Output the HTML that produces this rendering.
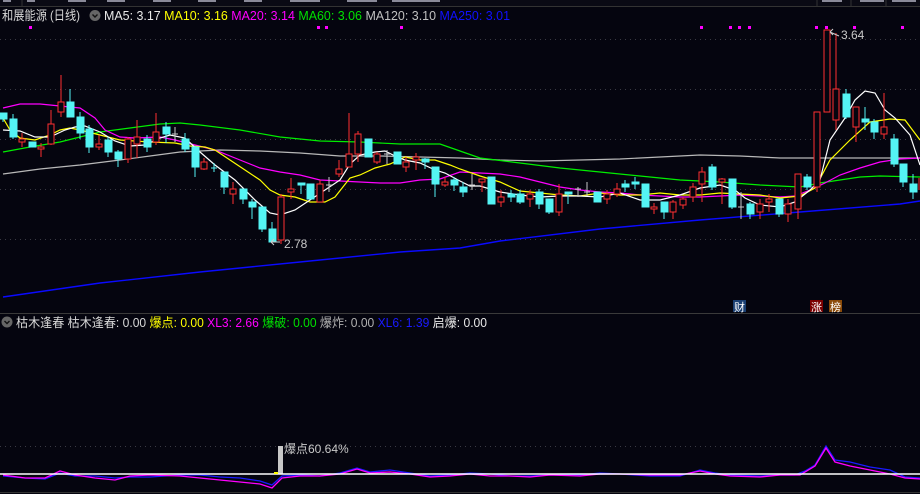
<!DOCTYPE html>
<html><head><meta charset="utf-8"><style>
html,body{margin:0;padding:0;background:#05050f;width:920px;height:494px;overflow:hidden}
svg{display:block}
text{font-family:"Liberation Sans","Noto Sans CJK SC",sans-serif}
</style></head><body>
<svg width="920" height="494" viewBox="0 0 920 494" xmlns="http://www.w3.org/2000/svg">
<rect width="920" height="494" fill="#05050f"/>
<rect x="0" y="0" width="920" height="6" fill="#0a0a14"/>
<g fill="#8a8a99"><rect x="3" y="0" width="8" height="2"/><rect x="27" y="0" width="8" height="2"/><rect x="68" y="0" width="18" height="2"/><rect x="107" y="0" width="18" height="2"/><rect x="153" y="0" width="18" height="2"/><rect x="198" y="0" width="18" height="2"/><rect x="244" y="0" width="18" height="2"/><rect x="290" y="0" width="30" height="2"/><rect x="347" y="0" width="30" height="2"/><rect x="392" y="0" width="48" height="2"/><rect x="822" y="0" width="20" height="2"/><rect x="860" y="0" width="24" height="2"/><rect x="892" y="0" width="24" height="2"/></g>
<line x1="22" y1="0" x2="22" y2="6" stroke="#333"/><line x1="817" y1="0" x2="817" y2="6" stroke="#333"/><line x1="851" y1="0" x2="851" y2="6" stroke="#333"/><line x1="886" y1="0" x2="886" y2="6" stroke="#333"/>
<line x1="0" y1="6.5" x2="920" y2="6.5" stroke="#333"/>
<text x="2" y="20" font-size="13" fill="#d8d8d8" textLength="78" lengthAdjust="spacingAndGlyphs">和展能源 (日线)</text>
<circle cx="95" cy="15.5" r="5.5" fill="#666"/><path d="M92.5 14.5 L95 17 L97.5 14.5" stroke="#111" stroke-width="1.4" fill="none"/>
<text x="104" y="20" font-size="13" textLength="406" lengthAdjust="spacingAndGlyphs"><tspan fill="#e8e8e8">MA5: 3.17 </tspan><tspan fill="#ffff00">MA10: 3.16 </tspan><tspan fill="#ff00ff">MA20: 3.14 </tspan><tspan fill="#00e000">MA60: 3.06 </tspan><tspan fill="#c0c0c0">MA120: 3.10 </tspan><tspan fill="#1010ff">MA250: 3.01</tspan></text>
<g fill="#ff00ff"><rect x="29" y="26" width="3" height="3"/><rect x="317" y="26" width="3" height="3"/><rect x="325" y="26" width="3" height="3"/><rect x="400" y="26" width="3" height="3"/><rect x="700" y="26" width="3" height="3"/><rect x="729" y="26" width="3" height="3"/><rect x="738" y="26" width="3" height="3"/><rect x="748" y="26" width="3" height="3"/><rect x="815" y="26" width="3" height="3"/><rect x="825" y="26" width="3" height="3"/><rect x="853" y="26" width="3" height="3"/><rect x="901" y="26" width="3" height="3"/></g>
<g stroke="#3a3a44" stroke-dasharray="1,4"><line x1="0" y1="39.5" x2="920" y2="39.5"/><line x1="0" y1="89.5" x2="920" y2="89.5"/><line x1="0" y1="139.5" x2="920" y2="139.5"/><line x1="0" y1="189.5" x2="920" y2="189.5"/><line x1="0" y1="239.5" x2="920" y2="239.5"/><line x1="0" y1="446.5" x2="920" y2="446.5"/></g>
<g fill="none" stroke-width="1.2">
<polyline stroke="#b8b8b8" points="3,174 40,169 80,165 120,160 150,156 180,152 220,150 260,151 300,153 340,156 380,156 420,157 460,158 500,160 540,161 580,160 620,159 660,157 700,155 740,156 780,158 820,158 860,158 920,158"/>
<polyline stroke="#00ee00" points="3,152 30,147 60,142 80,137 100,132 130,128 160,124 180,123 200,125 240,130 280,137 320,141 360,142 400,144 440,144 460,151 480,158 520,163 560,168 600,172 640,176 680,180 720,182 760,185 800,187 820,183 840,180 860,177 880,176 920,177"/>
<polyline stroke="#ff00ff" points="3,108 20,104 40,104 60,106 80,108 95,118 105,130 120,137 135,138 160,137 175,140 195,145 215,150 240,160 260,168 280,172 300,175 320,180 340,181 360,182 380,183 400,183 420,180 440,179 460,172 480,173 500,174 520,177 540,182 560,187 580,190 600,192 620,193 640,195 660,196 680,197 700,197 720,196 740,195 760,196 780,197 795,196 810,190 825,183 840,175 860,168 880,162 900,159 920,158"/>
<polyline stroke="#ffff00" points="3,118 10,130 20,138 35,140 50,135 60,130 70,128 80,130 100,135 120,140 150,142 175,143 190,146 205,147 215,150 230,160 245,170 260,180 270,190 280,195 295,197 310,202 325,202 335,197 350,178 360,175 375,168 390,164 405,157 420,160 435,160 450,165 460,169 480,176 500,182 520,191 540,193 560,195 580,196 600,193 620,195 640,195 660,193 680,195 700,195 720,193 740,194 760,195 780,198 800,196 815,188 830,160 850,140 870,122 890,119 905,120 920,140"/>
<polyline stroke="#ffffff" points="3,130 20,131 35,137 50,137 65,130 75,127 85,126 100,132 115,141 130,146 145,145 160,138 170,135 185,138 200,152 215,165 235,180 255,200 270,213 280,215 295,210 310,200 325,190 340,180 350,164 360,155 375,152 385,151 395,156 405,160 420,163 435,170 445,173 460,181 470,186 480,186 490,189 500,192 520,195 540,197 560,196 580,196 600,197 620,193 640,200 660,200 680,195 700,188 720,185 735,190 745,198 760,205 780,207 795,202 810,190 820,180 830,140 845,118 855,100 865,91 875,93 885,110 895,118 910,135 920,165"/>
<polyline stroke="#0a0aff" stroke-width="1.4" points="3,297 100,283 200,272 300,262 400,252 460,248 500,241 600,229 700,220 800,212 900,204 920,201"/>
</g>
<g stroke="#54f4f4" fill="#54f4f4" shape-rendering="crispEdges">
<line x1="3" y1="113" x2="3" y2="122"/><rect x="0" y="113" width="7" height="6"/>
<line x1="13" y1="114" x2="13" y2="139"/><rect x="10" y="119" width="7" height="18"/>
<line x1="32" y1="142" x2="32" y2="147"/><rect x="29" y="142" width="7" height="5"/>
<line x1="70" y1="89" x2="70" y2="117"/><rect x="67" y="102" width="7" height="15"/>
<line x1="80" y1="112" x2="80" y2="139"/><rect x="77" y="117" width="7" height="16"/>
<line x1="89" y1="125" x2="89" y2="153"/><rect x="86" y="129" width="7" height="18"/>
<line x1="108" y1="137" x2="108" y2="157"/><rect x="105" y="140" width="7" height="12"/>
<line x1="118" y1="150" x2="118" y2="167"/><rect x="115" y="152" width="7" height="7"/>
<line x1="147" y1="135" x2="147" y2="152"/><rect x="144" y="139" width="7" height="8"/>
<line x1="166" y1="122" x2="166" y2="143"/><rect x="163" y="127" width="7" height="7"/>
<line x1="185" y1="133" x2="185" y2="152"/><rect x="182" y="139" width="7" height="10"/>
<line x1="195" y1="146" x2="195" y2="177"/><rect x="192" y="147" width="7" height="20"/>
<line x1="214" y1="163" x2="214" y2="172"/><line x1="211" y1="168" x2="217" y2="168"/>
<line x1="224" y1="172" x2="224" y2="194"/><rect x="221" y="172" width="7" height="15"/>
<line x1="243" y1="189" x2="243" y2="204"/><rect x="240" y="189" width="7" height="10"/>
<line x1="252" y1="199" x2="252" y2="219"/><rect x="249" y="202" width="7" height="5"/>
<line x1="262" y1="207" x2="262" y2="232"/><rect x="259" y="207" width="7" height="22"/>
<line x1="272" y1="222" x2="272" y2="242"/><rect x="269" y="229" width="7" height="13"/>
<line x1="301" y1="184" x2="301" y2="194"/><rect x="298" y="183" width="7" height="2"/>
<rect x="307" y="184" width="7" height="15"/>
<rect x="365" y="139" width="7" height="18"/>
<rect x="394" y="152" width="7" height="12"/>
<line x1="425" y1="158" x2="425" y2="169"/><rect x="422" y="159" width="7" height="3"/>
<line x1="435" y1="167" x2="435" y2="197"/><rect x="432" y="167" width="7" height="17"/>
<line x1="454" y1="177" x2="454" y2="191"/><rect x="451" y="180" width="7" height="5"/>
<line x1="463" y1="182" x2="463" y2="197"/><rect x="460" y="187" width="7" height="5"/>
<rect x="488" y="177" width="7" height="27"/>
<line x1="511" y1="190" x2="511" y2="202"/><rect x="508" y="194" width="7" height="3"/>
<line x1="520" y1="190" x2="520" y2="204"/><rect x="517" y="194" width="7" height="8"/>
<line x1="539" y1="189" x2="539" y2="209"/><rect x="536" y="192" width="7" height="12"/>
<line x1="549" y1="199" x2="549" y2="214"/><rect x="546" y="199" width="7" height="13"/>
<line x1="568" y1="192" x2="568" y2="204"/><rect x="565" y="192" width="7" height="2"/>
<rect x="594" y="192" width="7" height="10"/>
<line x1="625" y1="180" x2="625" y2="192"/><rect x="622" y="184" width="7" height="3"/>
<line x1="635" y1="177" x2="635" y2="189"/><rect x="632" y="182" width="7" height="2"/>
<rect x="642" y="184" width="7" height="23"/>
<line x1="664" y1="202" x2="664" y2="219"/><rect x="661" y="202" width="7" height="10"/>
<line x1="712" y1="164" x2="712" y2="190"/><rect x="709" y="167" width="7" height="20"/>
<line x1="732" y1="179" x2="732" y2="209"/><rect x="729" y="179" width="7" height="28"/>
<line x1="750" y1="202" x2="750" y2="219"/><rect x="747" y="204" width="7" height="10"/>
<line x1="779" y1="199" x2="779" y2="217"/><rect x="776" y="199" width="7" height="15"/>
<line x1="807" y1="174" x2="807" y2="190"/><rect x="804" y="177" width="7" height="10"/>
<line x1="846" y1="89" x2="846" y2="119"/><rect x="843" y="94" width="7" height="23"/>
<line x1="865" y1="107" x2="865" y2="130"/><rect x="862" y="119" width="7" height="3"/>
<line x1="874" y1="119" x2="874" y2="139"/><rect x="871" y="122" width="7" height="10"/>
<line x1="894" y1="134" x2="894" y2="167"/><rect x="891" y="139" width="7" height="25"/>
<line x1="903" y1="164" x2="903" y2="187"/><rect x="900" y="164" width="7" height="18"/>
<line x1="913" y1="174" x2="913" y2="199"/><rect x="910" y="184" width="7" height="8"/>
</g>
<g stroke="#c8c8c8" shape-rendering="crispEdges">
<line x1="175" y1="127" x2="175" y2="142"/><line x1="172" y1="134" x2="178" y2="134"/>
<line x1="329" y1="177" x2="329" y2="192"/><line x1="326" y1="185" x2="332" y2="185"/>
<line x1="387" y1="150" x2="387" y2="164"/><line x1="384" y1="154" x2="390" y2="154"/>
<line x1="472" y1="174" x2="472" y2="190"/><line x1="469" y1="185" x2="475" y2="185"/>
<line x1="578" y1="187" x2="578" y2="197"/><line x1="575" y1="189" x2="581" y2="189"/>
<line x1="587" y1="182" x2="587" y2="196"/><line x1="584" y1="192" x2="590" y2="192"/>
<line x1="741" y1="192" x2="741" y2="219"/><line x1="738" y1="207" x2="744" y2="207"/>
</g>
<g stroke="#ff3030" fill="#05050f" stroke-width="1" shape-rendering="crispEdges">
<line x1="22" y1="133" x2="22" y2="147"/><rect x="19" y="139" width="6" height="3"/>
<line x1="41" y1="143" x2="41" y2="157"/><rect x="38" y="147" width="6" height="2"/>
<line x1="51" y1="110" x2="51" y2="145"/><rect x="48" y="124" width="6" height="20"/>
<line x1="61" y1="75" x2="61" y2="117"/><rect x="58" y="102" width="6" height="10"/>
<line x1="99" y1="135" x2="99" y2="150"/><rect x="96" y="144" width="6" height="3"/>
<line x1="128" y1="137" x2="128" y2="163"/><rect x="125" y="139" width="6" height="20"/>
<line x1="137" y1="120" x2="137" y2="158"/><rect x="134" y="137" width="6" height="7"/>
<line x1="156" y1="113" x2="156" y2="145"/><rect x="153" y="132" width="6" height="10"/>
<line x1="204" y1="158" x2="204" y2="170"/><rect x="201" y="162" width="6" height="7"/>
<line x1="233" y1="182" x2="233" y2="204"/><rect x="230" y="189" width="6" height="5"/>
<line x1="281" y1="194" x2="281" y2="244"/><rect x="278" y="197" width="6" height="43"/>
<line x1="291" y1="178" x2="291" y2="199"/><rect x="288" y="189" width="6" height="3"/>
<line x1="320" y1="180" x2="320" y2="202"/><rect x="317" y="184" width="6" height="18"/>
<line x1="339" y1="160" x2="339" y2="177"/><rect x="336" y="169" width="6" height="5"/>
<line x1="349" y1="113" x2="349" y2="167"/><rect x="346" y="154" width="6" height="13"/>
<line x1="358" y1="131" x2="358" y2="162"/><rect x="355" y="134" width="6" height="20"/>
<line x1="377" y1="152" x2="377" y2="164"/><rect x="374" y="154" width="6" height="8"/>
<line x1="406" y1="157" x2="406" y2="172"/><rect x="403" y="162" width="6" height="5"/>
<line x1="416" y1="153" x2="416" y2="170"/><rect x="413" y="157" width="6" height="3"/>
<line x1="445" y1="177" x2="445" y2="187"/><rect x="442" y="182" width="6" height="3"/>
<line x1="482" y1="179" x2="482" y2="192"/><rect x="479" y="179" width="6" height="3"/>
<line x1="501" y1="190" x2="501" y2="207"/><rect x="498" y="197" width="6" height="5"/>
<line x1="530" y1="190" x2="530" y2="207"/><rect x="527" y="194" width="6" height="5"/>
<line x1="559" y1="184" x2="559" y2="216"/><rect x="556" y="194" width="6" height="18"/>
<line x1="607" y1="190" x2="607" y2="204"/><rect x="604" y="194" width="6" height="5"/>
<line x1="617" y1="183" x2="617" y2="197"/><rect x="614" y="189" width="6" height="5"/>
<line x1="654" y1="203" x2="654" y2="214"/><rect x="651" y="207" width="6" height="2"/>
<line x1="673" y1="200" x2="673" y2="219"/><rect x="670" y="202" width="6" height="10"/>
<line x1="683" y1="197" x2="683" y2="209"/><rect x="680" y="199" width="6" height="6"/>
<line x1="693" y1="183" x2="693" y2="202"/><rect x="690" y="187" width="6" height="10"/>
<line x1="702" y1="167" x2="702" y2="202"/><rect x="699" y="172" width="6" height="12"/>
<line x1="722" y1="178" x2="722" y2="204"/><rect x="719" y="179" width="6" height="3"/>
<line x1="760" y1="199" x2="760" y2="219"/><rect x="757" y="204" width="6" height="8"/>
<line x1="769" y1="194" x2="769" y2="212"/><rect x="766" y="199" width="6" height="3"/>
<line x1="788" y1="199" x2="788" y2="222"/><rect x="785" y="204" width="6" height="10"/>
<line x1="798" y1="174" x2="798" y2="219"/><rect x="795" y="174" width="6" height="35"/>
<line x1="817" y1="112" x2="817" y2="192"/><rect x="814" y="112" width="6" height="75"/>
<rect x="824" y="30" width="6" height="82"/>
<line x1="836" y1="33" x2="836" y2="130"/><rect x="833" y="89" width="6" height="31"/>
<line x1="856" y1="107" x2="856" y2="142"/><rect x="853" y="107" width="6" height="20"/>
<line x1="884" y1="93" x2="884" y2="139"/><rect x="881" y="127" width="6" height="7"/>
<line x1="919" y1="178" x2="919" y2="190"/>
</g>
<path d="M830 32 L839 36 M830 32 L833 29 M830 32 L833 35" stroke="#ccc" fill="none"/>
<text x="841" y="39" font-size="12" fill="#c8c8c8">3.64</text>
<path d="M280 242 L271 242 M271 242 L274 239 M271 242 L274 245" stroke="#ccc" fill="none"/>
<text x="284" y="248" font-size="12" fill="#c8c8c8">2.78</text>
<rect x="733" y="300" width="13" height="12" fill="#1a3f72"/><text x="734" y="311" font-size="11" fill="#fff">财</text>
<rect x="810" y="300" width="13" height="12" fill="#7a0000"/><text x="811" y="311" font-size="11" fill="#fff">涨</text>
<rect x="829" y="300" width="13" height="12" fill="#8a4a08"/><text x="830" y="311" font-size="11" fill="#fff">榜</text>
<line x1="0" y1="313.5" x2="920" y2="313.5" stroke="#3a3a3a"/>
<circle cx="7" cy="322" r="5.5" fill="#666"/><path d="M4.5 321 L7 323.5 L9.5 321" stroke="#111" stroke-width="1.4" fill="none"/>
<text x="16" y="327" font-size="12.5" textLength="471" lengthAdjust="spacingAndGlyphs"><tspan fill="#d8d8d8">枯木逢春  枯木逢春: 0.00 </tspan><tspan fill="#ffff00">爆点: 0.00 </tspan><tspan fill="#ff00ff">XL3: 2.66 </tspan><tspan fill="#00e000">爆破: 0.00 </tspan><tspan fill="#b0b0b0">爆炸: 0.00 </tspan><tspan fill="#1a1aff">XL6: 1.39 </tspan><tspan fill="#e8e8e8">启爆: 0.00</tspan></text>
<rect x="278" y="446" width="5" height="28" fill="#c8c8c8"/>
<text x="284" y="453" font-size="12" fill="#c8c8c8">爆点60.64%</text>
<polyline fill="none" stroke="#1a1aff" stroke-width="1.3" points="3,476 25,478 45,479 60,473 75,476 95,476 115,478 130,477 150,477 180,475 200,475 220,477 240,478 260,481 272,485 282,476 300,475 320,476 340,473 357,468 370,472 390,470 410,473 430,476 450,475 470,473 490,474 510,476 530,476 550,475 580,475 600,473 620,474 650,476 680,476 700,470 715,473 730,475 760,476 780,475 795,475 805,471 815,465 826,446 835,460 850,462 870,467 890,470 905,477 920,478"/>
<polyline fill="none" stroke="#ff00ff" stroke-width="1.3" points="3,475 25,478 45,478 60,471 75,475 95,478 115,480 130,476 150,475 180,476 200,478 220,480 240,482 260,484 272,488 282,478 300,476 320,476 340,474 357,469 370,473 390,472 410,474 430,477 450,476 470,474 490,476 510,476 530,477 550,475 580,476 600,474 620,474 650,475 680,475 700,471 715,474 730,476 760,477 780,475 800,475 815,466 826,448 835,462 850,466 870,470 890,474 905,478 920,479"/>
<line x1="0" y1="474" x2="920" y2="474" stroke="#ffffff" stroke-width="1.5"/>
<rect x="274" y="472" width="4" height="2" fill="#ffff00"/>
<line x1="0" y1="492.5" x2="920" y2="492.5" stroke="#333"/>
</svg>
</body></html>
